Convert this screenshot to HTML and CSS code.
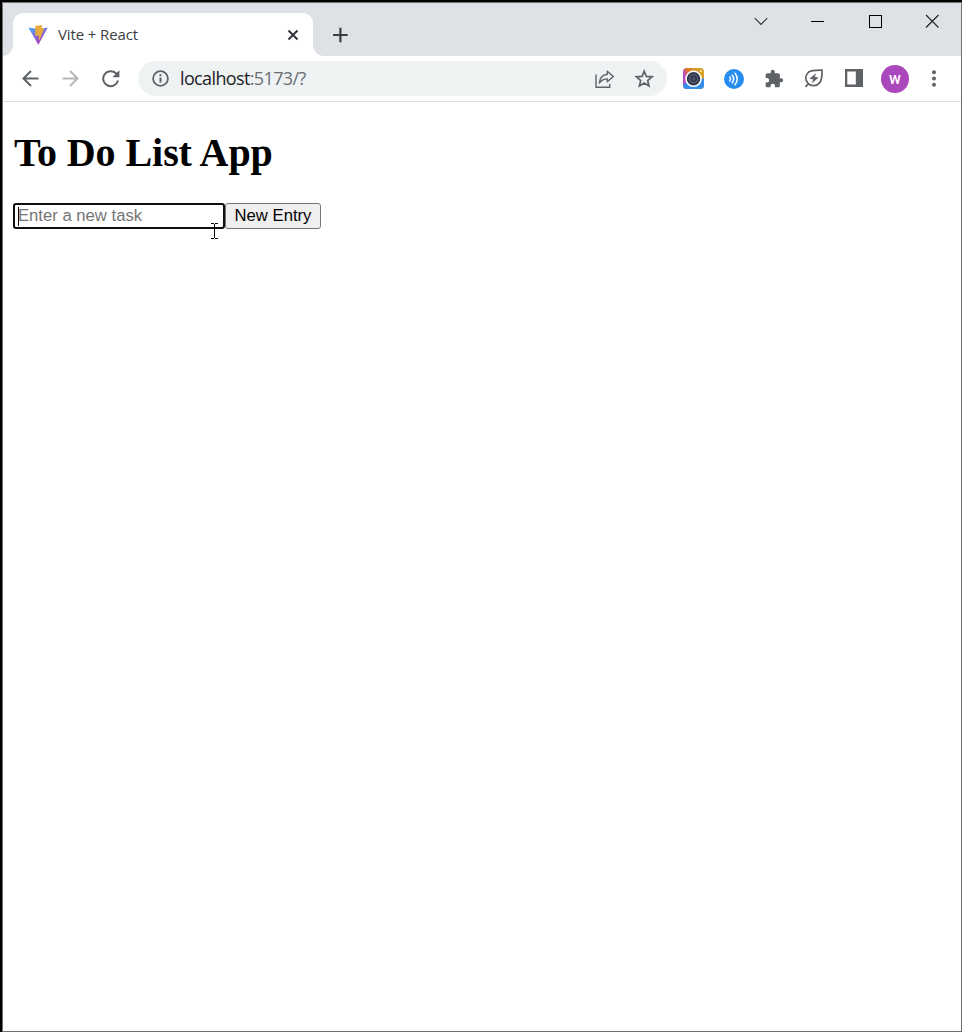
FILE: index.html
```html
<!DOCTYPE html>
<html lang="en">
<head>
<meta charset="utf-8">
<title>Vite + React</title>
<link rel="stylesheet" href="styles.css">
</head>
<body>
<div class="window">
  <header class="tabstrip">
    <div class="tab">
      <svg class="favicon" width="20" height="20" viewBox="0 0 20 20">
        <defs><linearGradient id="v" x1="0" y1="0" x2=".6" y2="1"><stop offset="0" stop-color="#45b0f5"/><stop offset=".5" stop-color="#7b72dc"/><stop offset="1" stop-color="#b534b8"/></linearGradient></defs>
        <path d="M.3 2.400 10 4l9.800-1.600L10.300 19.700Z" fill="url(#v)"/>
        <path d="m7.300 1 7.200-1-1.100 3.300h2.900l-5.300 12.700-.2-5.500-3.500.500Z" fill="#e8a93d"/>
      </svg>
      <span class="tab-title">Vite + React</span>
      <svg class="tab-close" width="12" height="12" viewBox="0 0 12 12"><path d="m1.500 1.500 9 9m0-9-9 9" stroke="#33343a" stroke-width="2" fill="none"/></svg>
    </div>
    <svg class="new-tab" width="16" height="16" viewBox="0 0 16 16"><path d="M8.400.7v14.600M1.100 8h14.600" stroke="#3c3d43" stroke-width="2.200"/></svg>
    <div class="controls">
      <svg width="14" height="14" viewBox="0 0 14 14"><path d="m.8 4.200 6.200 6.300 6.200-6.300" stroke="#34343a" stroke-width="1.200" fill="none"/></svg>
      <svg width="14" height="14" viewBox="0 0 14 14"><path d="M0 7.500h13" stroke="#000"/></svg>
      <svg width="14" height="14" viewBox="0 0 14 14" shape-rendering="crispEdges"><path d="M1.500 1.500h12v12h-12Z" stroke="#000" fill="none"/></svg>
      <svg width="14" height="14" viewBox="0 0 14 14"><path d="m1 1 12.500 12.500M13.500 1 1 13.500" stroke="#202027" stroke-width="1.100"/></svg>
    </div>
  </header>
  <nav class="toolbar">
    <div class="nav-buttons">
      <svg width="18" height="18" viewBox="0 0 18 18"><path d="M16.500 8.500h-15m7.500-7.500L1.500 8.500 9 16" stroke="#5f6368" stroke-width="2" fill="none"/></svg>
      <svg width="18" height="18" viewBox="0 0 18 18"><path d="M.5 8.500h15M8 1l7.500 7.500L8 16" stroke="#b6b8bb" stroke-width="2" fill="none"/></svg>
      <svg width="18" height="18" viewBox=".3 .5 18 18"><path d="M16.300 11a7.500 7.500 0 1 1-2-7.200L16 5.500" stroke="#5f6368" stroke-width="2" fill="none"/><path d="M17.700.8v6.900h-7Z" fill="#5f6368"/></svg>
    </div>
    <div class="address">
      <svg width="18" height="18" viewBox="-.5 .5 18 18"><circle cx="9" cy="9" r="7.400" stroke="#5f6368" stroke-width="1.800" fill="none"/><path d="M9 8v5M9 4.800v1.900" stroke="#5f6368" stroke-width="2"/></svg>
      <span class="url"><span class="host">localhost</span>:5173/?</span>
      <svg class="share" width="20" height="20" viewBox="-.5 0 20 20"><path d="M1.500 5.500v12.800h13.700v-3.200" stroke="#5f6368" stroke-width="1.400" fill="none"/><path d="M12.800 2.300 18.800 7.500l-6 5.300V9.900c-3.500 0-5.800 1.400-8 4.200.5-4.800 3.300-8.300 8-8.900Z" stroke="#5f6368" stroke-width="1.400" fill="none" stroke-linejoin="round"/></svg>
      <svg class="star" width="20" height="20" viewBox="-.2 .5 20 20"><path d="m10 2.700 2.100 5.200 5.700.4-4.300 3.700 1.300 5.500L10 14.600l-4.800 2.900L6.500 12 2.200 8.300l5.700-.4Z" stroke="#5f6368" stroke-width="1.700" fill="none"/></svg>
    </div>
    <div class="extensions">
      <svg width="21" height="21" viewBox="0 0 20 20">
        <defs><linearGradient id="c" x1="0" y1=".6" x2=".8" y2=".2"><stop offset="0" stop-color="#b04ad0"/><stop offset=".25" stop-color="#c04fb0"/><stop offset=".45" stop-color="#dd7a2c"/><stop offset="1" stop-color="#daa027"/></linearGradient></defs>
        <rect width="20" height="20" rx="3.500" fill="url(#c)"/><path d="M0 16 10 10h10v6.500a3.500 3.500 0 0 1-3.500 3.500h-13A3.500 3.500 0 0 1 0 16.500Z" fill="#338dea"/>
        <circle cx="10" cy="10.300" r="7.900" fill="#fff"/><circle cx="10" cy="10.300" r="6.400" fill="#30384b"/><circle cx="10" cy="10.300" r="3.800" fill="none" stroke="#60677b"/><circle cx="10" cy="10.300" r="1.700" fill="#4d5366"/><circle cx="17" cy="3" r=".8" fill="#fff"/>
      </svg>
      <svg width="20" height="20" viewBox="0 0 20 20"><circle cx="10" cy="10" r="10" fill="#278cf0"/><path d="M5.800 8q1.500 2 0 4M8.200 6.200q3 3.800 0 7.600M11 4.200q4.500 5.800 0 11.600" stroke="#fff" stroke-width="1.500" fill="none" stroke-linecap="round"/></svg>
      <svg width="20" height="20" viewBox="0 0 24 24"><path fill="#5f6368" d="M20.500 11H19V7c0-1.100-.9-2-2-2h-4V3.500a2.500 2.500 0 0 0-5 0V5H4c-1.100 0-2 .9-2 2v3.800h1.500a2.700 2.700 0 0 1 0 5.400H2V20c0 1.100.9 2 2 2h3.800v-1.500a2.700 2.700 0 0 1 5.400 0V22H17c1.100 0 2-.9 2-2v-4h1.500a2.500 2.500 0 0 0 0-5Z"/></svg>
      <svg width="20" height="20" viewBox="0 .5 20 20"><path d="M18 1.700c.2 6-.1 9.600-2.300 12.400-3 3.800-8.600 4-11.700.8-3.200-3.300-2.900-8.500.4-11.100C7.500 1.500 12 1.600 18 1.700ZM4.500 15.200l-3 3.200" stroke="#5f6368" stroke-width="1.700" fill="none"/><path d="M12.200 4.500 5.500 10.300l3.700.8-1.400 3.900 6.700-5.900-3.700-.8Z" fill="#5f6368"/></svg>
      <svg width="20" height="20" viewBox="0 1 20 20"><path fill="#5f6368" fill-rule="evenodd" d="M1 1h18v18H1ZM3.300 3.500v13h8.500v-13Z"/></svg>
      <div class="avatar">w</div>
      <svg class="menu" width="20" height="20" viewBox="0 0 20 20" fill="#5f6368"><circle cx="10" cy="3.300" r="2"/><circle cx="10" cy="9.500" r="2"/><circle cx="10" cy="15.800" r="2"/></svg>
    </div>
  </nav>
  <main class="page">
    <h1 class="heading">To Do List App</h1>
    <form class="entry">
      <div class="field"><span class="caret"></span><input class="task" type="text" placeholder="Enter a new task">
        <svg class="pointer" width="7" height="16" viewBox="0 0 7 16"><path d="M0 .5h3m1 0h3M3.500 1v14M0 15.500h3m1 0h3" stroke="#000" fill="none"/></svg>
      </div>
      <button class="submit" type="button">New Entry</button>
    </form>
  </main>
</div>
</body>
</html>
```
FILE: styles.css
```css
* { box-sizing: border-box; }
html, body { height: 100%; }
body { margin: 0; padding: 2px 0 0 2px; background: #000; overflow: hidden; }
svg { display: block; flex: none; }
.window { height: 100%; display: flex; flex-direction: column; border: 1px solid #707070; background: #fff; }

.tabstrip { height: 53px; flex: none; display: flex; align-items: flex-end; background: #dee1e6; padding-left: 10px; }
.tab { position: relative; width: 300px; height: 43px; display: flex; align-items: center; padding: 0 14px 0 15px; background: #fff; border-radius: 10px 10px 0 0; }
.tab::before, .tab::after { content: ""; position: absolute; bottom: 0; width: 10px; height: 10px; }
.tab::before { left: -10px; background: radial-gradient(circle at 0 0, #dee1e6 9.5px, #fff 10px); }
.tab::after { right: -10px; background: radial-gradient(circle at 100% 0, #dee1e6 9.5px, #fff 10px); }
.tab-title { flex: 1; margin-left: 10px; padding-bottom: 2px; font: 15px/20px "Open Sans", sans-serif; letter-spacing: -0.12px; color: #3c4043; white-space: nowrap; }
.new-tab { margin: 0 0 13px 19px; }
.controls { display: flex; gap: 43px; margin: 0 22px 28px auto; }

.toolbar { height: 46px; flex: none; display: flex; align-items: center; padding: 0 17px 0 19px; border-bottom: 1px solid #dadce0; }
.nav-buttons { display: flex; gap: 22px; margin-right: 18px; }
.address { width: 529px; height: 35px; display: flex; align-items: center; padding: 0 13px; background: #eff2f3; border-radius: 18px; }
.url { margin-left: 11px; padding-bottom: 1px; font: 18px/24px "Open Sans", sans-serif; letter-spacing: -0.63px; color: #6a6e73; }
.host { color: #202124; }
.share { margin-left: auto; margin-right: 20px; }
.extensions { display: flex; align-items: center; gap: 20px; margin-left: auto; }
.menu { margin-left: -2px; }
.avatar { width: 28px; height: 28px; margin: 0 -3px; border-radius: 50%; background: #ab47bc; color: #fff; font: 500 16px/27px Roboto, sans-serif; text-align: center; }

.page { flex: 1; padding: 0 10px; }
.heading { margin: 28px 0 27px 1px; font: bold 40px/46px "Liberation Serif", serif; letter-spacing: -0.07px; color: #000; white-space: nowrap; }
.entry { display: flex; margin: 0; }
.field { position: relative; }
.task { display: block; width: 212px; height: 26px; margin: 0; padding: 0 3px; border: 2px solid #101010; border-radius: 3px; outline: none; background: #fff; font: 16.67px/20px "Liberation Sans", Arial, sans-serif; }
.task::placeholder { color: #757575; }
.caret { position: absolute; left: 5px; top: 4px; width: 1px; height: 19px; background: #000; }
.pointer { position: absolute; left: 198px; top: 20px; }
.submit { width: 96px; height: 26px; margin: 0; padding: 0; border: 1px solid #767676; border-radius: 3px; background: #efefef; color: #000; font: 16.67px/20px "Liberation Sans", Arial, sans-serif; white-space: nowrap; }
```
